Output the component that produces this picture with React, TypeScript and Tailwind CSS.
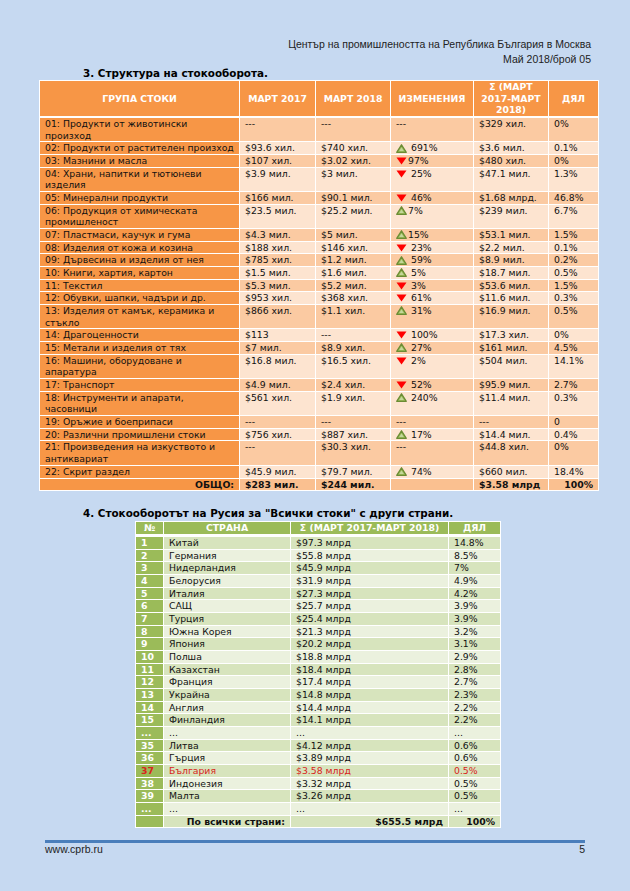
import React from 'react';

type Change = { dir: 'up' | 'down'; text: string; gap?: boolean } | null;

type GroupRow = {
  name: React.ReactNode;
  m17: string;
  m18: string;
  change: Change;
  sum: string;
  share: string;
};

const groups: GroupRow[] = [
  { name: <>01: Продукти от животински<br />произход</>, m17: '---', m18: '---', change: null, sum: '$329 хил.', share: '0%' },
  { name: '02: Продукти от растителен произход', m17: '$93.6 хил.', m18: '$740 хил.', change: { dir: 'up', text: '691%', gap: true }, sum: '$3.6 мил.', share: '0.1%' },
  { name: '03: Мазнини и масла', m17: '$107 хил.', m18: '$3.02 хил.', change: { dir: 'down', text: '97%' }, sum: '$480 хил.', share: '0%' },
  { name: <>04: Храни, напитки и тютюневи<br />изделия</>, m17: '$3.9 мил.', m18: '$3 мил.', change: { dir: 'down', text: '25%', gap: true }, sum: '$47.1 мил.', share: '1.3%' },
  { name: '05: Минерални продукти', m17: '$166 мил.', m18: '$90.1 мил.', change: { dir: 'down', text: '46%', gap: true }, sum: '$1.68 млрд.', share: '46.8%' },
  { name: <>06: Продукция от химическата<br />промишленост</>, m17: '$23.5 мил.', m18: '$25.2 мил.', change: { dir: 'up', text: '7%' }, sum: '$239 мил.', share: '6.7%' },
  { name: '07: Пластмаси, каучук и гума', m17: '$4.3 мил.', m18: '$5 мил.', change: { dir: 'up', text: '15%' }, sum: '$53.1 мил.', share: '1.5%' },
  { name: '08: Изделия от кожа и козина', m17: '$188 хил.', m18: '$146 хил.', change: { dir: 'down', text: '23%', gap: true }, sum: '$2.2 мил.', share: '0.1%' },
  { name: '09: Дървесина и изделия от нея', m17: '$785 хил.', m18: '$1.2 мил.', change: { dir: 'up', text: '59%', gap: true }, sum: '$8.9 мил.', share: '0.2%' },
  { name: '10: Книги, хартия, картон', m17: '$1.5 мил.', m18: '$1.6 мил.', change: { dir: 'up', text: '5%', gap: true }, sum: '$18.7 мил.', share: '0.5%' },
  { name: '11: Текстил', m17: '$5.3 мил.', m18: '$5.2 мил.', change: { dir: 'down', text: '3%', gap: true }, sum: '$53.6 мил.', share: '1.5%' },
  { name: '12: Обувки, шапки, чадъри и др.', m17: '$953 хил.', m18: '$368 хил.', change: { dir: 'down', text: '61%', gap: true }, sum: '$11.6 мил.', share: '0.3%' },
  { name: <>13: Изделия от камък, керамика и<br />стъкло</>, m17: '$866 хил.', m18: '$1.1 хил.', change: { dir: 'up', text: '31%', gap: true }, sum: '$16.9 мил.', share: '0.5%' },
  { name: '14: Драгоценности', m17: '$113', m18: '---', change: { dir: 'down', text: '100%', gap: true }, sum: '$17.3 хил.', share: '0%' },
  { name: '15: Метали и изделия от тях', m17: '$7 мил.', m18: '$8.9 хил.', change: { dir: 'up', text: '27%', gap: true }, sum: '$161 мил.', share: '4.5%' },
  { name: <>16: Машини, оборудоване и<br />апаратура</>, m17: '$16.8 мил.', m18: '$16.5 хил.', change: { dir: 'down', text: '2%', gap: true }, sum: '$504 мил.', share: '14.1%' },
  { name: '17: Транспорт', m17: '$4.9 мил.', m18: '$2.4 хил.', change: { dir: 'down', text: '52%', gap: true }, sum: '$95.9 мил.', share: '2.7%' },
  { name: <>18: Инструменти и апарати,<br />часовници</>, m17: '$561 хил.', m18: '$1.9 хил.', change: { dir: 'up', text: '240%', gap: true }, sum: '$11.4 мил.', share: '0.3%' },
  { name: '19: Оръжие и боеприпаси', m17: '---', m18: '---', change: null, sum: '---', share: '0' },
  { name: '20: Различни промишлени стоки', m17: '$756 хил.', m18: '$887 хил.', change: { dir: 'up', text: '17%', gap: true }, sum: '$14.4 мил.', share: '0.4%' },
  { name: <>21: Произведения на изкуството и<br />антиквариат</>, m17: '---', m18: '$30.3 хил.', change: null, sum: '$44.8 хил.', share: '0%' },
  { name: '22: Скрит раздел', m17: '$45.9 мил.', m18: '$79.7 мил.', change: { dir: 'up', text: '74%', gap: true }, sum: '$660 мил.', share: '18.4%' },
];

const countries: [string, string, string, string, boolean?][] = [
  ['1', 'Китай', '$97.3 млрд', '14.8%'],
  ['2', 'Германия', '$55.8 млрд', '8.5%'],
  ['3', 'Нидерландия', '$45.9 млрд', '7%'],
  ['4', 'Белорусия', '$31.9 млрд', '4.9%'],
  ['5', 'Италия', '$27.3 млрд', '4.2%'],
  ['6', 'САЩ', '$25.7 млрд', '3.9%'],
  ['7', 'Турция', '$25.4 млрд', '3.9%'],
  ['8', 'Южна Корея', '$21.3 млрд', '3.2%'],
  ['9', 'Япония', '$20.2 млрд', '3.1%'],
  ['10', 'Полша', '$18.8 млрд', '2.9%'],
  ['11', 'Казахстан', '$18.4 млрд', '2.8%'],
  ['12', 'Франция', '$17.4 млрд', '2.7%'],
  ['13', 'Украйна', '$14.8 млрд', '2.3%'],
  ['14', 'Англия', '$14.4 млрд', '2.2%'],
  ['15', 'Финландия', '$14.1 млрд', '2.2%'],
  ['...', '...', '...', '...'],
  ['35', 'Литва', '$4.12 млрд', '0.6%'],
  ['36', 'Гърция', '$3.89 млрд', '0.6%'],
  ['37', 'България', '$3.58 млрд', '0.5%', true],
  ['38', 'Индонезия', '$3.32 млрд', '0.5%'],
  ['39', 'Малта', '$3.26 млрд', '0.5%'],
  ['...', '...', '...', '...'],
];

const UpIcon = () => (
  <svg width="11" height="9" viewBox="0 0 11 9" className="shrink-0">
    <polygon points="5.5,0.8 10.3,8.3 0.7,8.3" fill="#9bbb59" stroke="#6b8c34" strokeWidth="1.3" strokeLinejoin="round" />
    <polygon points="5.5,3.6 7.8,7.1 3.2,7.1" fill="#c4d79b" />
  </svg>
);

const DownIcon = () => (
  <svg width="11" height="8" viewBox="0 0 11 8" className="shrink-0">
    <polygon points="0.5,0.5 10.5,0.5 5.5,7.5" fill="#ff0000" />
  </svg>
);

const ChangeCell = ({ change }: { change: Change }) => {
  if (!change) return <>---</>;
  return (
    <span className="inline-flex items-center h-[11.67px] align-top">
      {change.dir === 'up' ? <UpIcon /> : <DownIcon />}
      <span className={change.gap ? 'ml-[4px]' : 'ml-[1px]'}>{change.text}</span>
    </span>
  );
};

const StructureTable = () => {
  const cell = 'px-[5px]';
  return (
    <div className="ml-[39px] mt-[1px] w-[560px] bg-white p-[1px] flex flex-col gap-[2px] font-['DejaVu_Sans',sans-serif] text-[9.3px] leading-[11.67px] text-[#111]">
      <div className="grid grid-cols-[199px_75px_74px_82px_74px_49px] gap-px font-bold text-white text-center">
        <div className="bg-[#f79646] flex items-center justify-center">ГРУПА СТОКИ</div>
        <div className="bg-[#f79646] flex items-center justify-center">МАРТ 2017</div>
        <div className="bg-[#f79646] flex items-center justify-center">МАРТ 2018</div>
        <div className="bg-[#f79646] flex items-center justify-center">ИЗМЕНЕНИЯ</div>
        <div className="bg-[#f79646] flex items-center justify-center">
          Σ (МАРТ
          <br />
          2017-МАРТ
          <br />
          2018)
        </div>
        <div className="bg-[#f79646] flex items-center justify-center">ДЯЛ</div>
      </div>
      <div className="grid grid-cols-[199px_75px_74px_82px_74px_49px] gap-px">
        {groups.map((g, i) => {
          const bg = i % 2 === 0 ? 'bg-[#fbcaa2]' : 'bg-[#fde4d0]';
          return (
            <React.Fragment key={i}>
              <div className={`${cell} bg-[#f79646] whitespace-nowrap`}>{g.name}</div>
              <div className={`${cell} ${bg}`}>{g.m17}</div>
              <div className={`${cell} ${bg}`}>{g.m18}</div>
              <div className={`${cell} ${bg}`}>
                <ChangeCell change={g.change} />
              </div>
              <div className={`${cell} ${bg}`}>{g.sum}</div>
              <div className={`${cell} ${bg}`}>{g.share}</div>
            </React.Fragment>
          );
        })}
        <div className={`${cell} bg-[#f79646] font-bold text-right`}>ОБЩО:</div>
        <div className={`${cell} bg-[#fac090] font-bold`}>$283 мил.</div>
        <div className={`${cell} bg-[#fac090] font-bold`}>$244 мил.</div>
        <div className={`${cell} bg-[#fac090]`} />
        <div className={`${cell} bg-[#fac090] font-bold`}>$3.58 млрд</div>
        <div className={`${cell} bg-[#fac090] font-bold text-right`}>100%</div>
      </div>
    </div>
  );
};

const CountriesTable = () => {
  const cell = 'px-[5px]';
  return (
    <div className="ml-[135px] mt-[2px] w-[366px] bg-white p-[1px] flex flex-col gap-[3px] font-['DejaVu_Sans',sans-serif] text-[9.3px] leading-[11.67px] text-[#111]">
      <div className="grid grid-cols-[27px_126px_157px_51px] gap-px font-bold text-white text-center">
        <div className="bg-[#9bbb59]">№</div>
        <div className="bg-[#9bbb59]">СТРАНА</div>
        <div className="bg-[#9bbb59] whitespace-nowrap">Σ (МАРТ 2017-МАРТ 2018)</div>
        <div className="bg-[#9bbb59]">ДЯЛ</div>
      </div>
      <div className="grid grid-cols-[27px_126px_157px_51px] gap-px">
        {countries.map(([n, name, sum, share, hl], i) => {
          const bg = i % 2 === 0 ? 'bg-[#d7e4bd]' : 'bg-[#ebf1de]';
          const color = hl ? 'text-[#d8241c]' : '';
          return (
            <React.Fragment key={i}>
              <div className={`${cell} bg-[#9bbb59] font-bold ${hl ? 'text-[#d8241c]' : 'text-white'}`}>{n}</div>
              <div className={`${cell} ${bg} ${color}`}>{name}</div>
              <div className={`${cell} ${bg} ${color}`}>{sum}</div>
              <div className={`${cell} ${bg} ${color}`}>{share}</div>
            </React.Fragment>
          );
        })}
        <div className={`${cell} bg-[#9bbb59]`} />
        <div className={`${cell} bg-[#d7e4bd] font-bold text-right`}>По всички страни:</div>
        <div className={`${cell} bg-[#d7e4bd] font-bold text-right`}>$655.5 млрд</div>
        <div className={`${cell} bg-[#d7e4bd] font-bold text-right`}>100%</div>
      </div>
    </div>
  );
};

export default function App() {
  return (
    <div className="w-[630px] h-[891px] bg-[#c6d9f1] pt-[37px] overflow-hidden">
      <div className="pr-[39px] text-right font-['Liberation_Sans',sans-serif] text-[10.5px] leading-[15px] text-[#222]">
        <div>Център на промишлеността на Република България в Москва</div>
        <div>Май 2018/брой 05</div>
      </div>
      <h2 className="ml-[83px] font-['DejaVu_Sans',sans-serif] font-bold text-[10.4px] leading-[12px] text-black">
        3. Структура на стокооборота.
      </h2>
      <StructureTable />
      <h2 className="ml-[83px] mt-[16px] font-['DejaVu_Sans',sans-serif] font-bold text-[10.4px] leading-[12px] text-black">
        4. Стокооборотът на Русия за "Всички стоки" с други страни.
      </h2>
      <CountriesTable />
      <footer className="mx-[45px] mt-[12px] border-t-[3px] border-[#4a7ebb] flex justify-between font-['Liberation_Sans',sans-serif] text-[10.5px] leading-[12px] text-[#222]">
        <span>www.cprb.ru</span>
        <span>5</span>
      </footer>
    </div>
  );
}
